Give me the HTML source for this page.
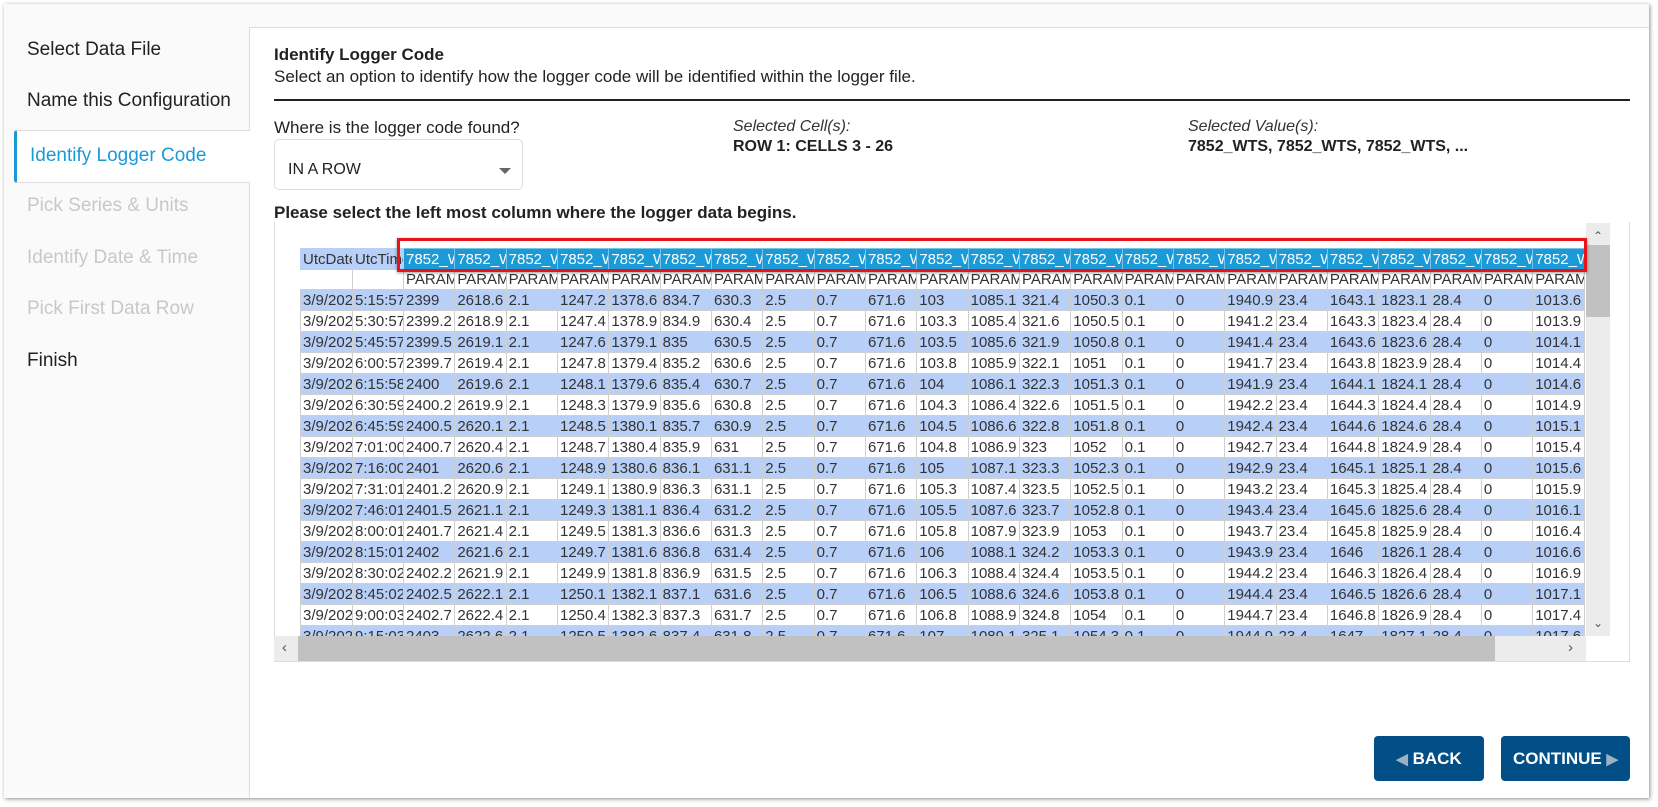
<!DOCTYPE html>
<html><head><meta charset="utf-8"><style>
*{box-sizing:border-box;margin:0;padding:0}
body{width:1658px;height:807px;background:#fff;font-family:"Liberation Sans",sans-serif;color:#222;position:relative;overflow:hidden}
.win{position:absolute;left:4px;top:4px;width:1645px;height:794px;background:#fafafa;box-shadow:1px 1px 4px rgba(0,0,0,.45)}
.side{position:absolute;left:15px;top:27px;width:234px;height:771px;background:#fafafa}
.nav{position:absolute;left:27px;font-size:19px;line-height:22px;white-space:nowrap}
.dis{color:#c8c8c8}
.active{position:absolute;left:14px;top:130px;width:236px;height:53px;background:#fff;border:1px solid #ddd;border-left:3px solid #1a9ad6;border-right:none;border-radius:3px 0 0 3px;z-index:3}
.active span{position:absolute;left:13px;top:14px;font-size:19px;color:#1a9ad6;white-space:nowrap}
.main{position:absolute;left:249px;top:27px;width:1400px;height:771px;background:#fff;border-left:1px solid #ddd;border-top:1px solid #ddd}
.abs{position:absolute;white-space:nowrap}
.tbox{position:absolute;left:274px;top:222px;width:1356px;height:440px;border:1px solid #ddd;border-top:none;background:#fff}
.clip{position:absolute;left:0;top:0;width:1312px;height:414px;overflow:hidden}
table{position:absolute;left:25px;top:26px;border-collapse:collapse;table-layout:fixed;width:1284px;font-size:15px}
td{border:1px solid #cfcfcf;height:21px;padding:0 2px;overflow:hidden;white-space:nowrap;line-height:19px;color:#333}
tr.b td{background:#b8cff7}
tr.h td{background:#b8cff7;border-color:#b8cff7;height:21px}
tr.h td.l{background:#1a9ad6;color:#fff;border-color:#7cc2e8}
tr.p td{height:20px}
.red{position:absolute;left:397px;top:238px;height:34px;border:3px solid #e8141a;width:1190px;z-index:5;box-shadow:0 1px 3px rgba(0,0,0,.4)}
.vs{position:absolute;left:1586px;top:223px;width:24px;height:413px;background:#ececec}
.hs{position:absolute;left:274px;top:636px;width:1312px;height:25px;background:#ececec}
.btn{position:absolute;top:736px;height:45px;background:#024f87;color:#fff;font-weight:bold;font-size:17px;border-radius:4px;text-align:center;line-height:45px}
.btn i{font-style:normal;color:#9db1c4;font-size:15px}
</style></head><body>
<div class="win"></div>
<div class="side"></div>
<div class="nav" style="top:39px">Select Data File</div>
<div class="nav" style="top:90px">Name this Configuration</div>
<div class="main"></div>
<div class="active"><span>Identify Logger Code</span></div>
<div class="nav dis" style="top:195px">Pick Series &amp; Units</div>
<div class="nav dis" style="top:247px">Identify Date &amp; Time</div>
<div class="nav dis" style="top:298px">Pick First Data Row</div>
<div class="nav" style="top:350px">Finish</div>

<div class="abs" style="left:274px;top:45px;font-size:17px;font-weight:bold">Identify Logger Code</div>
<div class="abs" style="left:274px;top:67px;font-size:17px">Select an option to identify how the logger code will be identified within the logger file.</div>
<div class="abs" style="left:274px;top:99px;width:1356px;height:2px;background:#222"></div>
<div class="abs" style="left:274px;top:118px;font-size:17px">Where is the logger code found?</div>
<div class="abs" style="left:274px;top:139px;width:249px;height:51px;border:1px solid #ddd;border-radius:5px"></div>
<div class="abs" style="left:288px;top:161px;font-size:16px">IN A ROW</div>
<div class="abs" style="left:499px;top:168px;width:0;height:0;border-left:6px solid transparent;border-right:6px solid transparent;border-top:6px solid #666"></div>
<div class="abs" style="left:733px;top:118px;font-size:16px;font-style:italic;color:#333">Selected Cell(s):</div>
<div class="abs" style="left:733px;top:138px;font-size:16px;font-weight:bold">ROW 1: CELLS 3 - 26</div>
<div class="abs" style="left:1188px;top:118px;font-size:16px;font-style:italic;color:#333">Selected Value(s):</div>
<div class="abs" style="left:1188px;top:138px;font-size:16px;font-weight:bold">7852_WTS, 7852_WTS, 7852_WTS, ...</div>
<div class="abs" style="left:274px;top:203px;font-size:17px;font-weight:bold">Please select the left most column where the logger data begins.</div>

<div class="tbox"><div class="clip">
<table>
<colgroup><col style="width:52px"><col style="width:51px"><col span="23" style="width:51.33px"></colgroup>
<tr class="h"><td>UtcDate</td><td>UtcTime</td><td class="l">7852_WTS</td><td class="l">7852_WTS</td><td class="l">7852_WTS</td><td class="l">7852_WTS</td><td class="l">7852_WTS</td><td class="l">7852_WTS</td><td class="l">7852_WTS</td><td class="l">7852_WTS</td><td class="l">7852_WTS</td><td class="l">7852_WTS</td><td class="l">7852_WTS</td><td class="l">7852_WTS</td><td class="l">7852_WTS</td><td class="l">7852_WTS</td><td class="l">7852_WTS</td><td class="l">7852_WTS</td><td class="l">7852_WTS</td><td class="l">7852_WTS</td><td class="l">7852_WTS</td><td class="l">7852_WTS</td><td class="l">7852_WTS</td><td class="l">7852_WTS</td><td class="l">7852_WTS</td></tr>
<tr class="p"><td style="border-left-color:#fff"></td><td></td><td>PARAM</td><td>PARAM</td><td>PARAM</td><td>PARAM</td><td>PARAM</td><td>PARAM</td><td>PARAM</td><td>PARAM</td><td>PARAM</td><td>PARAM</td><td>PARAM</td><td>PARAM</td><td>PARAM</td><td>PARAM</td><td>PARAM</td><td>PARAM</td><td>PARAM</td><td>PARAM</td><td>PARAM</td><td>PARAM</td><td>PARAM</td><td>PARAM</td><td>PARAM</td></tr>
<tr class="b"><td>3/9/2021</td><td>5:15:57</td><td>2399</td><td>2618.6</td><td>2.1</td><td>1247.2</td><td>1378.6</td><td>834.7</td><td>630.3</td><td>2.5</td><td>0.7</td><td>671.6</td><td>103</td><td>1085.1</td><td>321.4</td><td>1050.3</td><td>0.1</td><td>0</td><td>1940.9</td><td>23.4</td><td>1643.1</td><td>1823.1</td><td>28.4</td><td>0</td><td>1013.6</td></tr>
<tr><td>3/9/2021</td><td>5:30:57</td><td>2399.2</td><td>2618.9</td><td>2.1</td><td>1247.4</td><td>1378.9</td><td>834.9</td><td>630.4</td><td>2.5</td><td>0.7</td><td>671.6</td><td>103.3</td><td>1085.4</td><td>321.6</td><td>1050.5</td><td>0.1</td><td>0</td><td>1941.2</td><td>23.4</td><td>1643.3</td><td>1823.4</td><td>28.4</td><td>0</td><td>1013.9</td></tr>
<tr class="b"><td>3/9/2021</td><td>5:45:57</td><td>2399.5</td><td>2619.1</td><td>2.1</td><td>1247.6</td><td>1379.1</td><td>835</td><td>630.5</td><td>2.5</td><td>0.7</td><td>671.6</td><td>103.5</td><td>1085.6</td><td>321.9</td><td>1050.8</td><td>0.1</td><td>0</td><td>1941.4</td><td>23.4</td><td>1643.6</td><td>1823.6</td><td>28.4</td><td>0</td><td>1014.1</td></tr>
<tr><td>3/9/2021</td><td>6:00:57</td><td>2399.7</td><td>2619.4</td><td>2.1</td><td>1247.8</td><td>1379.4</td><td>835.2</td><td>630.6</td><td>2.5</td><td>0.7</td><td>671.6</td><td>103.8</td><td>1085.9</td><td>322.1</td><td>1051</td><td>0.1</td><td>0</td><td>1941.7</td><td>23.4</td><td>1643.8</td><td>1823.9</td><td>28.4</td><td>0</td><td>1014.4</td></tr>
<tr class="b"><td>3/9/2021</td><td>6:15:58</td><td>2400</td><td>2619.6</td><td>2.1</td><td>1248.1</td><td>1379.6</td><td>835.4</td><td>630.7</td><td>2.5</td><td>0.7</td><td>671.6</td><td>104</td><td>1086.1</td><td>322.3</td><td>1051.3</td><td>0.1</td><td>0</td><td>1941.9</td><td>23.4</td><td>1644.1</td><td>1824.1</td><td>28.4</td><td>0</td><td>1014.6</td></tr>
<tr><td>3/9/2021</td><td>6:30:59</td><td>2400.2</td><td>2619.9</td><td>2.1</td><td>1248.3</td><td>1379.9</td><td>835.6</td><td>630.8</td><td>2.5</td><td>0.7</td><td>671.6</td><td>104.3</td><td>1086.4</td><td>322.6</td><td>1051.5</td><td>0.1</td><td>0</td><td>1942.2</td><td>23.4</td><td>1644.3</td><td>1824.4</td><td>28.4</td><td>0</td><td>1014.9</td></tr>
<tr class="b"><td>3/9/2021</td><td>6:45:59</td><td>2400.5</td><td>2620.1</td><td>2.1</td><td>1248.5</td><td>1380.1</td><td>835.7</td><td>630.9</td><td>2.5</td><td>0.7</td><td>671.6</td><td>104.5</td><td>1086.6</td><td>322.8</td><td>1051.8</td><td>0.1</td><td>0</td><td>1942.4</td><td>23.4</td><td>1644.6</td><td>1824.6</td><td>28.4</td><td>0</td><td>1015.1</td></tr>
<tr><td>3/9/2021</td><td>7:01:00</td><td>2400.7</td><td>2620.4</td><td>2.1</td><td>1248.7</td><td>1380.4</td><td>835.9</td><td>631</td><td>2.5</td><td>0.7</td><td>671.6</td><td>104.8</td><td>1086.9</td><td>323</td><td>1052</td><td>0.1</td><td>0</td><td>1942.7</td><td>23.4</td><td>1644.8</td><td>1824.9</td><td>28.4</td><td>0</td><td>1015.4</td></tr>
<tr class="b"><td>3/9/2021</td><td>7:16:00</td><td>2401</td><td>2620.6</td><td>2.1</td><td>1248.9</td><td>1380.6</td><td>836.1</td><td>631.1</td><td>2.5</td><td>0.7</td><td>671.6</td><td>105</td><td>1087.1</td><td>323.3</td><td>1052.3</td><td>0.1</td><td>0</td><td>1942.9</td><td>23.4</td><td>1645.1</td><td>1825.1</td><td>28.4</td><td>0</td><td>1015.6</td></tr>
<tr><td>3/9/2021</td><td>7:31:01</td><td>2401.2</td><td>2620.9</td><td>2.1</td><td>1249.1</td><td>1380.9</td><td>836.3</td><td>631.1</td><td>2.5</td><td>0.7</td><td>671.6</td><td>105.3</td><td>1087.4</td><td>323.5</td><td>1052.5</td><td>0.1</td><td>0</td><td>1943.2</td><td>23.4</td><td>1645.3</td><td>1825.4</td><td>28.4</td><td>0</td><td>1015.9</td></tr>
<tr class="b"><td>3/9/2021</td><td>7:46:01</td><td>2401.5</td><td>2621.1</td><td>2.1</td><td>1249.3</td><td>1381.1</td><td>836.4</td><td>631.2</td><td>2.5</td><td>0.7</td><td>671.6</td><td>105.5</td><td>1087.6</td><td>323.7</td><td>1052.8</td><td>0.1</td><td>0</td><td>1943.4</td><td>23.4</td><td>1645.6</td><td>1825.6</td><td>28.4</td><td>0</td><td>1016.1</td></tr>
<tr><td>3/9/2021</td><td>8:00:01</td><td>2401.7</td><td>2621.4</td><td>2.1</td><td>1249.5</td><td>1381.3</td><td>836.6</td><td>631.3</td><td>2.5</td><td>0.7</td><td>671.6</td><td>105.8</td><td>1087.9</td><td>323.9</td><td>1053</td><td>0.1</td><td>0</td><td>1943.7</td><td>23.4</td><td>1645.8</td><td>1825.9</td><td>28.4</td><td>0</td><td>1016.4</td></tr>
<tr class="b"><td>3/9/2021</td><td>8:15:01</td><td>2402</td><td>2621.6</td><td>2.1</td><td>1249.7</td><td>1381.6</td><td>836.8</td><td>631.4</td><td>2.5</td><td>0.7</td><td>671.6</td><td>106</td><td>1088.1</td><td>324.2</td><td>1053.3</td><td>0.1</td><td>0</td><td>1943.9</td><td>23.4</td><td>1646</td><td>1826.1</td><td>28.4</td><td>0</td><td>1016.6</td></tr>
<tr><td>3/9/2021</td><td>8:30:02</td><td>2402.2</td><td>2621.9</td><td>2.1</td><td>1249.9</td><td>1381.8</td><td>836.9</td><td>631.5</td><td>2.5</td><td>0.7</td><td>671.6</td><td>106.3</td><td>1088.4</td><td>324.4</td><td>1053.5</td><td>0.1</td><td>0</td><td>1944.2</td><td>23.4</td><td>1646.3</td><td>1826.4</td><td>28.4</td><td>0</td><td>1016.9</td></tr>
<tr class="b"><td>3/9/2021</td><td>8:45:02</td><td>2402.5</td><td>2622.1</td><td>2.1</td><td>1250.1</td><td>1382.1</td><td>837.1</td><td>631.6</td><td>2.5</td><td>0.7</td><td>671.6</td><td>106.5</td><td>1088.6</td><td>324.6</td><td>1053.8</td><td>0.1</td><td>0</td><td>1944.4</td><td>23.4</td><td>1646.5</td><td>1826.6</td><td>28.4</td><td>0</td><td>1017.1</td></tr>
<tr><td>3/9/2021</td><td>9:00:03</td><td>2402.7</td><td>2622.4</td><td>2.1</td><td>1250.4</td><td>1382.3</td><td>837.3</td><td>631.7</td><td>2.5</td><td>0.7</td><td>671.6</td><td>106.8</td><td>1088.9</td><td>324.8</td><td>1054</td><td>0.1</td><td>0</td><td>1944.7</td><td>23.4</td><td>1646.8</td><td>1826.9</td><td>28.4</td><td>0</td><td>1017.4</td></tr>
<tr class="b"><td>3/9/2021</td><td>9:15:03</td><td>2403</td><td>2622.6</td><td>2.1</td><td>1250.5</td><td>1382.6</td><td>837.4</td><td>631.8</td><td>2.5</td><td>0.7</td><td>671.6</td><td>107</td><td>1089.1</td><td>325.1</td><td>1054.3</td><td>0.1</td><td>0</td><td>1944.9</td><td>23.4</td><td>1647</td><td>1827.1</td><td>28.4</td><td>0</td><td>1017.6</td></tr>
</table>
</div></div>
<div class="red"></div>
<div class="vs">
  <div style="position:absolute;left:0;top:22px;width:24px;height:72px;background:#c1c1c1"></div>
  <div style="position:absolute;left:7px;top:6px;font-size:12px;color:#555">&#8963;</div>
  <div style="position:absolute;left:7px;top:393px;font-size:12px;color:#555">&#8964;</div>
</div>
<div class="hs">
  <div style="position:absolute;left:24px;top:0;width:1197px;height:25px;background:#c1c1c1"></div>
  <div style="position:absolute;left:8px;top:3px;font-size:15px;color:#555">&lsaquo;</div>
  <div style="position:absolute;left:1294px;top:3px;font-size:15px;color:#555">&rsaquo;</div>
</div>
<div class="btn" style="left:1374px;width:110px"><i>&#9664;</i> BACK</div>
<div class="btn" style="left:1501px;width:129px">CONTINUE <i>&#9654;</i></div>
</body></html>
